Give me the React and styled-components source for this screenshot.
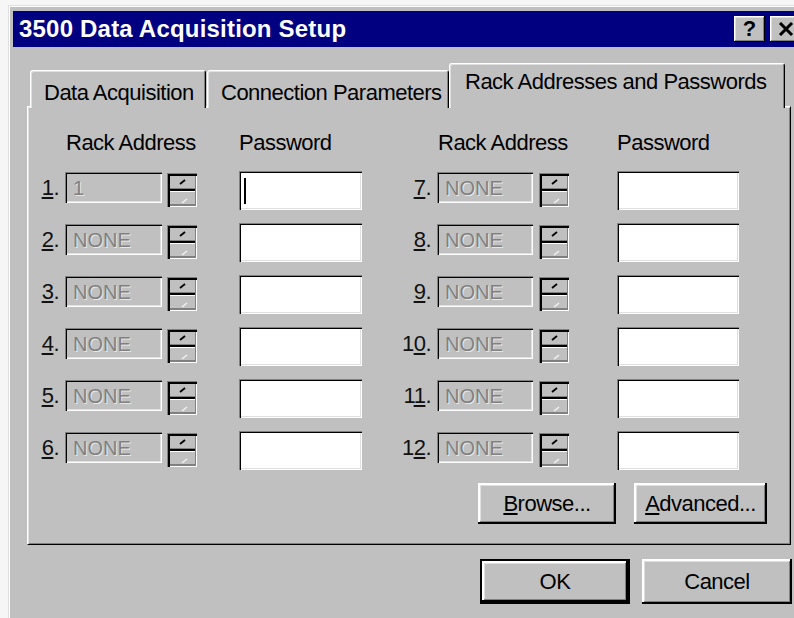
import React from 'react';
import styled, { createGlobalStyle } from 'styled-components';

const GlobalStyle = createGlobalStyle`
    html, body {
        margin: 0;
        padding: 0;
        background: #f6f6f6;
        overflow: hidden;
    }
    body {
        font-family: "Liberation Sans", Arial, sans-serif;
    }
`;

const Desktop = styled.div`
    width: 794px;
    height: 618px;
    overflow: hidden;
    padding: 5px 0 0 8px;
    box-sizing: border-box;
`;

const Window = styled.div`
    width: 801px;
    height: 640px;
    box-sizing: border-box;
    background: #c0c0c0;
    border-top: 1px solid #dfdfdf;
    border-left: 1px solid #dfdfdf;
    box-shadow: inset 1px 1px #fff;
    padding: 5px 4px 0 4px;
`;

const TitleBar = styled.div`
    height: 36px;
    background: #000080;
    display: flex;
    align-items: center;
    padding: 0 4px 0 6px;
    color: #fff;
`;

const Title = styled.div`
    flex: 1;
    font-size: 24px;
    font-weight: bold;
    letter-spacing: 0.2px;
`;

const CaptionButton = styled.div`
    width: 31px;
    height: 26px;
    box-sizing: border-box;
    margin-left: ${p => (p.$gap ? '5px' : '0')};
    background: #c0c0c0;
    color: #000;
    display: flex;
    align-items: center;
    justify-content: center;
    font-size: 22px;
    font-weight: bold;
    box-shadow: inset -1px -1px #000, inset 1px 1px #fff, inset -2px -2px #808080, inset 2px 2px #dfdfdf;
`;

const Client = styled.div`
    padding: 16px 14px 0 14px;
`;

const TabRow = styled.div`
    display: flex;
    align-items: flex-end;
    height: 45px;
    margin-bottom: -2px;
    padding-left: 3px;
    position: relative;
    z-index: 1;
`;

const Tab = styled.div`
    box-sizing: border-box;
    width: ${p => p.$width}px;
    height: ${p => (p.$active ? 45 : 38)}px;
    margin-left: ${p => p.$offset || 0}px;
    padding: ${p => (p.$active ? '6px 0 0 15px' : '10px 0 0 13px')};
    background: #c0c0c0;
    border: 1px solid;
    border-color: #fff #000 transparent #fff;
    border-bottom: none;
    border-radius: 3px 3px 0 0;
    box-shadow: inset 1px 1px #dfdfdf, inset -1px 0 #808080;
    font-size: 22px;
    letter-spacing: -0.5px;
    line-height: 24px;
    white-space: nowrap;
    color: #000;
`;

const Panel = styled.div`
    height: 439px;
    box-sizing: border-box;
    border: 1px solid;
    border-color: #fff #000 #000 #fff;
    box-shadow: inset 1px 1px #dfdfdf, inset -1px -1px #808080;
    padding: 24px 0 0 2px;
`;

const Grid = styled.div`
    display: grid;
    grid-template-columns: 35px 97px 77px 123px 75px 96px 84px 122px;
    grid-template-rows: 27px;
    grid-auto-rows: 39px;
    row-gap: 13px;
    align-items: start;
    font-size: 22px;
    letter-spacing: -0.5px;
    line-height: 24px;
`;

const Heading = styled.div`
    grid-column: span ${p => p.$span || 1};
    padding-left: ${p => p.$indent || 0}px;
    white-space: nowrap;
    color: #000;
`;

const Label = styled.div`
    text-align: right;
    padding-right: 6px;
    margin-top: 5px;
    color: #111;
    white-space: nowrap;
`;

const Key = styled.span`
    text-decoration: underline;
    text-underline-offset: 2px;
`;

const AddressField = styled.div`
    height: 31px;
    margin-top: 1px;
    box-sizing: border-box;
    display: flex;
    align-items: center;
    padding-left: 8px;
    background: #c0c0c0;
    color: #808080;
    font-size: 20px;
    letter-spacing: 0;
    text-shadow: 1px 1px #e8e8e8;
    box-shadow: inset 1px 1px #808080, inset 2px 2px #000, inset -1px -1px #fff, inset -2px -2px #dfdfdf;
`;

const PasswordField = styled.div`
    height: 39px;
    box-sizing: border-box;
    display: flex;
    align-items: center;
    padding-left: 5px;
    background: #fff;
    box-shadow: inset 1px 1px #808080, inset 2px 2px #000, inset -1px -1px #fff, inset -2px -2px #dfdfdf;
`;

const Caret = styled.span`
    width: 2px;
    height: 26px;
    background: #000;
`;

const SpinBox = styled.div`
    width: 30px;
    height: 34px;
    margin: 2px 0 0 ${p => p.$offset}px;
    box-sizing: border-box;
    padding: 3px 2px 2px 3px;
    display: grid;
    grid-template-rows: 1fr 1fr;
    background: #c0c0c0;
    box-shadow: inset 1px 1px #808080, inset 3px 3px #000, inset -1px -1px #fff, inset -2px -2px #808080;
`;

const SpinHalf = styled.div`
    display: flex;
    align-items: center;
    justify-content: center;
    box-shadow: ${p =>
        p.$upper
            ? 'inset 0 -2px #000, inset 0 -3px #808080'
            : 'inset 0 1px #fff, inset 0 -1px #808080'};
`;

const PanelButtons = styled.div`
    display: flex;
    justify-content: flex-end;
    gap: 18px;
    margin-top: 13px;
    padding-right: 23px;
`;

const DialogButtons = styled.div`
    display: flex;
    justify-content: flex-end;
    gap: 12px;
    margin-top: 14px;
    margin-right: -1px;
`;

const Button = styled.div`
    width: ${p => p.$width}px;
    height: ${p => p.$height}px;
    box-sizing: border-box;
    display: flex;
    align-items: center;
    justify-content: center;
    background: #c0c0c0;
    color: #000;
    font-size: 22px;
    letter-spacing: -0.5px;
    border: ${p => (p.$default ? '2px solid #000' : 'none')};
    box-shadow: inset -2px -2px #000, inset 2px 2px #fff, inset -3px -3px #808080, inset 3px 3px #dfdfdf;
`;

function SpinArrows({ offset }) {
    return (
        <SpinBox $offset={offset}>
            <SpinHalf $upper>
                <svg width="10" height="8" viewBox="0 0 10 8" style={{ marginTop: -3 }}>
                    <path d="M2 6 L7 2" stroke="#000" strokeWidth="1.8" />
                </svg>
            </SpinHalf>
            <SpinHalf>
                <svg width="10" height="8" viewBox="0 0 10 8" style={{ marginTop: 6, marginLeft: 4 }}>
                    <path d="M2 6 L7 2" stroke="#f0f0f0" strokeWidth="1.6" />
                </svg>
            </SpinHalf>
        </SpinBox>
    );
}

function RackLabel({ n }) {
    const s = String(n);
    return (
        <Label>
            {s.slice(0, -1)}
            <Key>{s.slice(-1)}</Key>.
        </Label>
    );
}

function RackRow({ n, address, spinOffset, focused }) {
    return (
        <>
            <RackLabel n={n} />
            <AddressField>{address}</AddressField>
            <SpinArrows offset={spinOffset} />
            <PasswordField>{focused && <Caret />}</PasswordField>
        </>
    );
}

const racks = [1, 2, 3, 4, 5, 6];

export default function App() {
    return (
        <Desktop>
            <GlobalStyle />
            <Window>
                <TitleBar>
                    <Title>3500 Data Acquisition Setup</Title>
                    <CaptionButton>?</CaptionButton>
                    <CaptionButton $gap>
                        <svg width="16" height="14" viewBox="0 0 16 14">
                            <path d="M2 1 L14 13 M14 1 L2 13" stroke="#000" strokeWidth="3" />
                        </svg>
                    </CaptionButton>
                </TitleBar>
                <Client>
                    <TabRow>
                        <Tab $width={176}>Data Acquisition</Tab>
                        <Tab $width={242} $offset={1}>Connection Parameters</Tab>
                        <Tab $width={336} $active>Rack Addresses and Passwords</Tab>
                    </TabRow>
                    <Panel>
                        <Grid>
                            <div />
                            <Heading $span={2} $indent={1}>Rack Address</Heading>
                            <Heading>Password</Heading>
                            <div />
                            <Heading $span={2} $indent={1}>Rack Address</Heading>
                            <Heading>Password</Heading>
                            {racks.map(n => (
                                <React.Fragment key={n}>
                                    <RackRow
                                        n={n}
                                        address={n === 1 ? '1' : 'NONE'}
                                        spinOffset={5}
                                        focused={n === 1}
                                    />
                                    <RackRow n={n + 6} address="NONE" spinOffset={6} />
                                </React.Fragment>
                            ))}
                        </Grid>
                        <PanelButtons>
                            <Button $width={138} $height={41}>
                                <span><Key>B</Key>rowse...</span>
                            </Button>
                            <Button $width={133} $height={41}>
                                <span><Key>A</Key>dvanced...</span>
                            </Button>
                        </PanelButtons>
                    </Panel>
                    <DialogButtons>
                        <Button $width={150} $height={45} $default>OK</Button>
                        <Button $width={150} $height={45}>Cancel</Button>
                    </DialogButtons>
                </Client>
            </Window>
        </Desktop>
    );
}
